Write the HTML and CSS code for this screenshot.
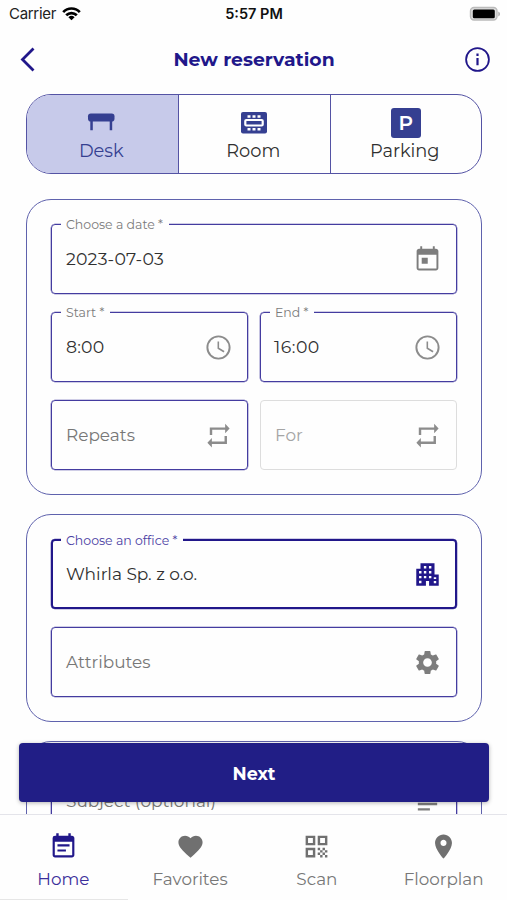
FILE: index.html
```html
<!DOCTYPE html>
<html lang="en">
<head>
<meta charset="utf-8">
<title>New reservation</title>
<link rel="stylesheet" href="styles.css">
</head>
<body>
<div class="app">
  <div class="status">
    <div class="carrier"><span>Carrier</span>
      <svg width="19" height="14" viewBox="0 0 19 14" fill="none" stroke="#000" stroke-width="2.700"><path d="M1.200 5.100C5.800.3 13.200.3 17.800 5.100M4.200 8.300c3-3 7.600-3 10.600 0"/><path d="M9.500 13.300 6.400 10.200a4.500 4.500 0 0 1 6.200 0z" fill="#000" stroke="none"/></svg>
    </div>
    <div class="time">5:57 PM</div>
    <svg class="battery" width="32" height="16" viewBox="0 0 32 16"><rect x="1.500" y="1.500" width="26.500" height="12.500" rx="3.500" fill="#ddd" stroke="#bbb" stroke-width="1.400"/><rect x="3.800" y="3.500" width="22" height="8.800" rx="1.500"/><path d="M29.300 5.500v5q1.700-.8 1.700-2.500t-1.700-2.500z" fill="#aaa"/></svg>
  </div>
  <header class="nav">
    <svg width="16" height="26" viewBox="0 0 16 26" fill="none" stroke="#21178a" stroke-width="2.800"><path d="M13.500 2.500 2.500 13.500l11 11"/></svg>
    <h1>New reservation</h1>
    <svg width="26" height="26" viewBox="0 0 26 26" fill="none" stroke="#21178a"><circle cx="13.500" cy="13.500" r="11.400" stroke-width="1.800"/><path d="M13.500 12v7.300M13.500 7.500v2.500" stroke-width="2.200"/></svg>
  </header>
  <main class="content">
    <div class="segments">
      <div class="segment active">
        <svg width="28" height="30" viewBox="0 0 28 30" fill="#353f91"><rect x="1" y="5.500" width="26.500" height="8" rx="2.800"/><path d="M3.300 12h2.500v10.300H3.300zM22.700 12h2.500v10.300h-2.500z"/></svg>
        <span>Desk</span>
      </div>
      <div class="segment">
        <svg class="nudge" width="28" height="30" viewBox="0 0 28 30"><rect x="1" y="4" width="26" height="21.500" rx="2" fill="#353f91"/><rect x="5.300" y="12" width="17.400" height="5.500" rx="1" fill="none" stroke="#fff" stroke-width="2.200"/><path d="M7.500 7.300h3v2.400h-3zm5 0h3v2.400h-3zm5 0h3v2.400h-3zM7.500 20h3v2.400h-3zm5 0h3v2.400h-3zm5 0h3v2.400h-3z" fill="#fff"/></svg>
        <span>Room</span>
      </div>
      <div class="segment">
        <span class="parking nudge">P</span>
        <span>Parking</span>
      </div>
    </div>

    <section class="card">
      <div class="field">
        <label>Choose a date *</label>
        <span class="value number">2023-07-03</span>
        <svg class="icon" viewBox="0 0 24 24"><path d="M19 3h-1V1h-1.600v2H7.600V1H6v2H5c-1.110 0-1.990.9-1.990 2L3 19c0 1.100.89 2 2 2h14c1.100 0 2-.9 2-2V5c0-1.100-.9-2-2-2zm.4 16.400H4.600V8h14.800v11.400zM7.200 10.500h5v5h-5z"/></svg>
      </div>
      <div class="row">
        <div class="field">
          <label>Start *</label>
          <span class="value number">8:00</span>
          <svg class="icon light" viewBox="0 0 24 24"><path d="M11.990 2C6.470 2 2 6.480 2 12s4.470 10 9.990 10C17.520 22 22 17.520 22 12S17.520 2 11.990 2zM12 20.400a8.400 8.400 0 1 1 0-16.800 8.400 8.400 0 0 1 0 16.800zm.5-13.400H11.200v6l5.050 3.150.75-1.230-4.500-2.670z"/></svg>
        </div>
        <div class="field">
          <label>End *</label>
          <span class="value number wide">16:00</span>
          <svg class="icon light" viewBox="0 0 24 24"><path d="M11.990 2C6.470 2 2 6.480 2 12s4.470 10 9.990 10C17.520 22 22 17.520 22 12S17.520 2 11.990 2zM12 20.400a8.400 8.400 0 1 1 0-16.800 8.400 8.400 0 0 1 0 16.800zm.5-13.400H11.200v6l5.050 3.150.75-1.230-4.500-2.670z"/></svg>
        </div>
      </div>
      <div class="row">
        <div class="field">
          <span class="value hint">Repeats</span>
          <svg class="icon light" viewBox="0 0 24 24"><path d="M4.800 11.500V5.300h12.700V2.300L21.200 6.200l-3.700 3.900V7.200H6.800v4.300zM19 12.500v6.500H6.500v2.900L2.800 18l3.700-3.900V17H17v-4.500z"/></svg>
        </div>
        <div class="field disabled">
          <span class="value hint">For</span>
          <svg class="icon light" viewBox="0 0 24 24"><path d="M4.800 11.500V5.300h12.700V2.300L21.200 6.200l-3.700 3.900V7.200H6.800v4.300zM19 12.500v6.500H6.500v2.900L2.800 18l3.700-3.900V17H17v-4.500z"/></svg>
        </div>
      </div>
    </section>

    <section class="card">
      <div class="field focused">
        <label>Choose an office *</label>
        <span class="value">Whirla Sp. z o.o.</span>
        <svg class="icon" viewBox="0 0 24 24"><path fill-rule="evenodd" d="M17.800 12V2.700H6.200V7.200H2.700v14.100h8v-4h2.600v4h8V12zM5 9.200h2v2H5zm0 4h2v2H5zm0 4h2v2H5zM9 5h2v2H9zm0 4.200h2v2H9zm0 4h2v2H9zM13.200 5h2v2h-2zm0 4.200h2v2h-2zm0 4h2v2h-2zm4 1h2v1.600h-2zm0 3.200h2v1.900h-2z"/></svg>
      </div>
      <div class="field">
        <span class="value hint">Attributes</span>
        <svg class="icon" viewBox="0 0 24 24"><path d="M19.140 12.940c.04-.3.060-.61.060-.94 0-.32-.02-.64-.07-.94l2.030-1.580c.18-.14.23-.41.120-.61l-1.920-3.320c-.12-.22-.37-.29-.59-.22l-2.390.96c-.5-.38-1.030-.7-1.620-.94l-.36-2.540c-.04-.24-.24-.41-.48-.41h-3.840c-.24 0-.43.17-.47.41l-.36 2.540c-.59.24-1.130.57-1.620.94l-2.390-.96c-.22-.08-.47 0-.59.22L2.740 8.870c-.12.210-.08.470.120.610l2.030 1.580c-.05.3-.09.630-.09.940s.02.640.070.940l-2.030 1.580c-.18.140-.23.410-.12.610l1.920 3.320c.12.220.37.290.59.220l2.390-.96c.5.380 1.030.7 1.620.940l.36 2.540c.05.240.24.410.48.410h3.840c.24 0 .44-.17.47-.41l.36-2.540c.59-.24 1.130-.56 1.620-.94l2.390.96c.22.080.47 0 .59-.22l1.920-3.320c.12-.22.070-.47-.12-.61l-2.010-1.580zM12 15.600c-1.980 0-3.600-1.620-3.600-3.600s1.620-3.600 3.600-3.600 3.600 1.620 3.600 3.600-1.620 3.600-3.600 3.600z"/></svg>
      </div>
    </section>

    <section class="card last">
      <div class="field">
        <span class="value hint">Subject (optional)</span>
        <svg class="icon" viewBox="0 0 24 24"><path d="M4 8.500h16v2H4zM4 13h16v2H4zM4 17.500h10v2H4z"/></svg>
      </div>
    </section>
    <button class="next">Next</button>
  </main>
  <nav class="tabs">
    <div class="tab current">
      <svg viewBox="0 0 24 24"><path d="M19 3h-1V1h-2v2H8V1H6v2H5a2 2 0 0 0-2 2v14c0 1.100.9 2 2 2h14c1.100 0 2-.9 2-2V5c0-1.100-.9-2-2-2zm.2 16.200H4.800V8h14.400zM7 10.200h10v1.700H7zM7 14.500h7v1.700H7z"/></svg>
      <span>Home</span>
    </div>
    <div class="tab">
      <svg viewBox="0 0 24 24"><path d="m12 21.350-1.450-1.320C5.400 15.360 2 12.280 2 8.500 2 5.420 4.420 3 7.500 3c1.740 0 3.410.81 4.500 2.090C13.090 3.810 14.760 3 16.500 3 19.580 3 22 5.420 22 8.500c0 3.780-3.400 6.860-8.550 11.540L12 21.350z"/></svg>
      <span>Favorites</span>
    </div>
    <div class="tab">
      <svg viewBox="0 0 24 24"><path d="M3 11h8V3H3v8zm2-6h4v4H5V5zM3 21h8v-8H3v8zm2-6h4v4H5v-4zM13 3v8h8V3h-8zm6 6h-4V5h4v4zM19 19h2v2h-2zM13 13h2v2h-2zM15 15h2v2h-2zM13 17h2v2h-2zM15 19h2v2h-2zM17 17h2v2h-2zM17 13h2v2h-2zM19 15h2v2h-2z"/></svg>
      <span>Scan</span>
    </div>
    <div class="tab">
      <svg viewBox="0 0 24 24"><path d="M12 2C8.130 2 5 5.130 5 9c0 5.250 7 13 7 13s7-7.750 7-13c0-3.870-3.130-7-7-7zm0 9.500c-1.380 0-2.500-1.120-2.500-2.500s1.120-2.500 2.500-2.500 2.500 1.120 2.500 2.500-1.120 2.500-2.500 2.500z"/></svg>
      <span>Floorplan</span>
    </div>
  </nav>
</div>
</body>
</html>
```
FILE: styles.css
```css
* { box-sizing: border-box; }
body { margin: 0; background: #fefefe; color: #303030; font: 17px/20px Montserrat, Inter, sans-serif; }
svg { display: block; flex: none; }
.app { width: 507px; height: 900px; display: flex; flex-direction: column; overflow: hidden; }

.status { height: 28px; padding: 0 6px 0 9px; display: grid; grid-template-columns: 1fr auto 1fr; align-items: center; font: 15px/28px Inter, sans-serif; color: #222; }
.carrier { display: flex; align-items: center; gap: 6px; letter-spacing: -.3px; }
.time { font-weight: 600; font-size: 14.5px; color: #111; margin-right: 2px; }
.battery { justify-self: end; }

.nav { height: 62px; padding: 0 17px 0 20px; display: flex; align-items: center; justify-content: space-between; }
.nav h1 { margin: 1px 0 0 8px; font-size: 18.800px; line-height: 24px; font-weight: 700; color: #21178a; }

.content { position: relative; flex: 1; min-height: 0; padding: 4px 25px 0 26px; overflow: hidden; }
.segments { height: 80px; margin-left: -.5px; display: grid; grid-template-columns: repeat(3, 1fr); border: 1px solid #5453a4; border-radius: 25px; overflow: hidden; font-size: 17.800px; }
.segment { display: flex; flex-direction: column; align-items: center; padding: 13px 2px 0 0; gap: 3px; }
.segment + .segment { border-left: 1px solid #5453a4; }
.segment.active { background: #c7caea; color: #353f91; }
.nudge { margin-left: 2px; }
.parking { width: 30px; height: 30px; border-radius: 3px; background: #353f91; color: #fff; font-size: 20px; line-height: 31px; font-weight: 600; text-align: center; }

.card { margin-top: 25px; padding: 24px; border: 1px solid #5f62ad; border-radius: 25px; display: flex; flex-direction: column; gap: 18px; }
.card + .card { margin-top: 19px; }
.row { display: grid; grid-template-columns: 1fr 1fr; gap: 12px; }
.field { position: relative; height: 70px; padding: 0 16px 0 14px; border: 1px solid #443ca0; box-shadow: 0 0 0 .3px #443ca0; border-radius: 4px; display: flex; align-items: center; justify-content: space-between; }
.field label { position: absolute; left: 9px; top: -8px; padding: 0 6px 0 5px; height: 16px; background: #fefefe; font-size: 12.500px; line-height: 16px; color: #7b7b7b; white-space: nowrap; }
.icon { width: 29px; height: 29px; margin-right: -2px; fill: #7d7d7d; }
.icon.light { fill: #8c8c8c; }
.value { white-space: nowrap; }
.number { font-size: 17.300px; letter-spacing: .2px; }
.number.wide { margin-left: -1px; letter-spacing: .5px; }
.hint { color: #777; font-size: 16.900px; }
.disabled { border-color: #ddd; box-shadow: none; }
.disabled .hint { color: #a5a5a5; }
.focused { padding: 0 15px 0 13px; border: 2px solid #21178a; }
.focused label { left: 8px; color: #4a40a3; }
.focused .icon { fill: #21178a; }
.last { height: 200px; }

.next { position: absolute; left: 19px; top: 653px; width: 470px; height: 59px; border: 0; border-radius: 4px; background: #211e86; color: #fff; font: 700 17.500px/20px Montserrat, Inter, sans-serif; padding: 3px 0 0; box-shadow: 0 1px 4px rgba(0,0,0,.3); }

.tabs { height: 86px; border-top: 1px solid #e4e4ea; display: grid; grid-template-columns: repeat(4, 1fr); position: relative; }
.tabs::after { content: ""; position: absolute; left: 0; bottom: 0; width: 128px; height: 1px; background: #e6e6e6; }
.tab { display: flex; flex-direction: column; align-items: center; padding-top: 17px; gap: 8px; color: #777; font-size: 16.800px; }
.tab svg { width: 29px; height: 29px; fill: #707070; }
.tab.current { color: #3b2f9b; }
.tab.current svg { fill: #21178a; }
```
